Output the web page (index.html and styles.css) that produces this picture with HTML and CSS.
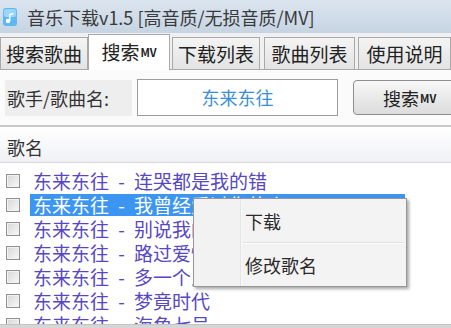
FILE: index.html
```html
<!DOCTYPE html>
<html lang="zh-CN">

<head>
    <meta charset="UTF-8">
    <meta name="viewport" content="width=device-width, initial-scale=1.0">
    <title>音乐下载v1.5</title>
    <link rel="stylesheet" href="styles.css">
</head>

<body>
    <div class="window">
        <div class="titlebar">
            <svg class="app-icon" width="14" height="18" viewBox="0 0 14 18">
                <rect x="0" y="0" width="14" height="18" rx="3" fill="#5fb8f0"/>
                <rect x="1" y="1" width="12" height="8" rx="2" fill="#9ad6fa"/>
                <circle cx="5" cy="13" r="2.2" fill="#ffffff"/>
                <path d="M6.8 13V6.5l3.5-1" stroke="#ffffff" stroke-width="1.4" fill="none"/>
            </svg>
            <span class="title">音乐下载v1.5 [高音质/无损音质/MV]</span>
        </div>

        <div class="tabs">
            <div class="tab">搜索歌曲</div>
            <div class="tab active">搜索<span class="mv">MV</span></div>
            <div class="tab">下载列表</div>
            <div class="tab">歌曲列表</div>
            <div class="tab">使用说明</div>
        </div>

        <div class="search">
            <span class="label">歌手/歌曲名:</span>
            <div class="input">东来东往</div>
            <button class="btn">搜索<span class="mv">MV</span></button>
        </div>

        <div class="list">
            <div class="list-head">歌名</div>
            <div class="row"><span class="check"></span><span class="name">东来东往 - 连哭都是我的错</span></div>
            <div class="row selected"><span class="check"></span><span class="name">东来东往 - 我曾经爱过你的人</span></div>
            <div class="row"><span class="check"></span><span class="name">东来东往 - 别说我的眼泪你无所谓</span></div>
            <div class="row"><span class="check"></span><span class="name">东来东往 - 路过爱情</span></div>
            <div class="row"><span class="check"></span><span class="name">东来东往 - 多一个人寂寞</span></div>
            <div class="row"><span class="check"></span><span class="name">东来东往 - 梦竟时代</span></div>
            <div class="row"><span class="check"></span><span class="name">东来东往 - 海角七号</span></div>
        </div>
        <div class="scrollbar"></div>

        <div class="menu">
            <div class="menu-item">下载</div>
            <div class="menu-sep"></div>
            <div class="menu-item">修改歌名</div>
        </div>
    </div>
</body>

</html>
```

FILE: styles.css
```css
body {
    margin: 0;
    font-family: "Noto Sans CJK SC", "Liberation Sans", sans-serif;
    background: #ffffff;
}

.window {
    width: 451px;
    height: 328px;
    position: relative;
    overflow: hidden;
    background: #ffffff;
}

.titlebar {
    height: 33px;
    display: flex;
    align-items: center;
    gap: 10px;
    padding-left: 3px;
    background: linear-gradient(#dbe5ef, #c6d4e3);
}

.title {
    font-size: 18px;
    line-height: 20px;
    color: #3a3a3a;
    white-space: nowrap;
}

.tabs {
    height: 37px;
    display: flex;
    align-items: flex-end;
    background: #f0f0f0;
    border-bottom: 1px solid #a9a9a9;
    box-sizing: border-box;
}

.tab {
    flex-shrink: 0;
    height: 32px;
    line-height: 31px;
    font-size: 19px;
    color: #222222;
    border: 1px solid #a9a9a9;
    border-bottom: none;
    background: linear-gradient(#f4f4f4, #e3e3e3);
    margin-right: 2px;
    box-sizing: border-box;
    width: 88px;
    text-align: center;
}

.tab:nth-child(3) {
    margin-right: 4px;
}

.tab:nth-child(4) {
    width: 91px;
    margin-right: 3px;
}

.tab:nth-child(5) {
    width: 93px;
}

.tab.active {
    height: 36px;
    line-height: 33px;
    background: #ffffff;
    margin-bottom: -1px;
    width: 82px;
    margin-left: -2px;
}

.mv {
    font-size: 11px;
    font-weight: bold;
    vertical-align: 3px;
    margin-left: 1px;
}

.search {
    height: 57px;
    display: flex;
    align-items: center;
    padding-left: 5px;
    background: #fbfbfb;
    border-bottom: 2px solid #c9c9c9;
    box-sizing: border-box;
    overflow: hidden;
}

.label {
    flex-shrink: 0;
    font-size: 18px;
    line-height: 36px;
    color: #333333;
    background: #eeeeee;
    padding-left: 2px;
    width: 125px;
    white-space: nowrap;
}

.input {
    flex-shrink: 0;
    width: 201px;
    height: 37px;
    margin-left: 5px;
    border: 1px solid #9c9c9c;
    box-sizing: border-box;
    background: #ffffff;
    color: #3b8fd6;
    font-size: 18px;
    line-height: 34px;
    text-align: center;
}

.btn {
    flex-shrink: 0;
    margin-left: 15px;
    width: 110px;
    height: 35px;
    border: 1px solid #8c8c8c;
    border-radius: 4px;
    background: linear-gradient(#f7f7f7, #dcdcdc);
    font-family: inherit;
    font-size: 18px;
    color: #222222;
    padding: 0 0 0 29px;
    text-align: left;
}

.list {
    height: 197px;
    overflow: hidden;
}

.list-head {
    height: 36px;
    line-height: 40px;
    padding-left: 7px;
    font-size: 18px;
    color: #333333;
    background: linear-gradient(#ffffff, #f0f1f5);
    border-bottom: 1px solid #d8d8d8;
    box-sizing: border-box;
    margin-bottom: 6px;
}

.row {
    height: 24px;
    display: flex;
    align-items: center;
}

.check {
    flex-shrink: 0;
    width: 12px;
    height: 12px;
    margin: 0 10px 0 6px;
    border: 1px solid #8f8f8f;
    background: linear-gradient(135deg, #d6d6d6, #f8f8f8);
    box-shadow: inset 0 0 0 1px #f2f2f2;
}

.name {
    font-size: 19px;
    line-height: 22px;
    color: #5647c2;
    white-space: nowrap;
    word-spacing: 5px;
    padding: 0 6px 0 3px;
}

.row.selected .name {
    background: #3d95f2;
    color: #ffffff;
    width: 366px;
}

.scrollbar {
    height: 4px;
    background: #d6d6d6;
    border-top: 1px solid #c4c4c4;
}

.menu {
    position: absolute;
    left: 193px;
    top: 198px;
    width: 214px;
    height: 89px;
    box-sizing: border-box;
    border: 1px solid #979797;
    background: linear-gradient(to right, #f2f2f2 46px, #e2e3e3 46px, #e2e3e3 47px, #ffffff 47px, #f3f3f3 48px);
    box-shadow: 2px 2px 3px rgba(0, 0, 0, 0.35);
    padding: 2px 0;
}

.menu-item {
    height: 40px;
    line-height: 40px;
    padding-left: 51px;
    font-size: 18px;
    color: #2a2a2a;
}

.menu-sep {
    height: 1px;
    margin: 1px 2px 1px 49px;
    background: #e0e0e0;
    border-bottom: 1px solid #ffffff;
}
```
